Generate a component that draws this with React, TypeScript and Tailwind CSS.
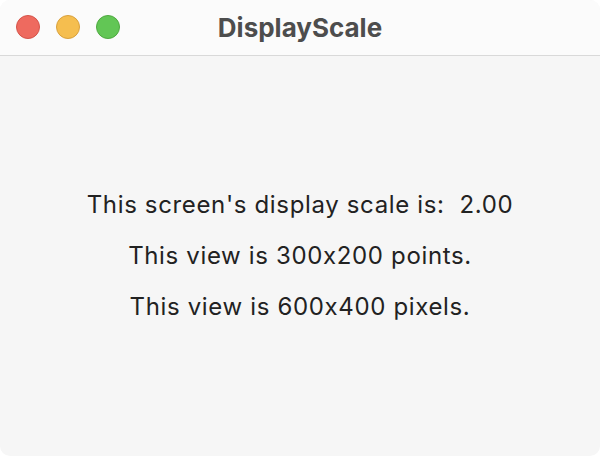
export default function App() {
  return (
    <div className="w-[600px] h-[456px] bg-white">
      <div
        className="w-full h-full rounded-[10px] overflow-hidden flex flex-col bg-[#f6f6f6]"
        style={{ fontFamily: 'Inter, "Noto Sans", sans-serif', fontFeatureSettings: '"calt" 0' }}
      >
        {/* title bar */}
        <div className="relative h-[56px] shrink-0 flex items-center justify-center bg-[#fbfbfb] border-b border-[#d9d9d9]">
          <div className="absolute left-[16px] top-[15px] flex gap-[16px]">
            <span className="w-[24px] h-[24px] rounded-full bg-[#ee6a5f] border border-[#d5544a]" />
            <span className="w-[24px] h-[24px] rounded-full bg-[#f5be4f] border border-[#d9a13d]" />
            <span className="w-[24px] h-[24px] rounded-full bg-[#62c655] border border-[#4fa940]" />
          </div>
          <span className="text-[26px] font-bold text-[#4d4d4d]">DisplayScale</span>
        </div>

        {/* content */}
        <div className="flex-1 flex flex-col items-center justify-center gap-[21px] text-[24px] leading-[30px] tracking-[0.65px] text-[#222222]">
          <p>This screen's display scale is:&nbsp; 2.00</p>
          <p>This view is 300x200 points.</p>
          <p>This view is 600x400 pixels.</p>
        </div>
      </div>
    </div>
  );
}
